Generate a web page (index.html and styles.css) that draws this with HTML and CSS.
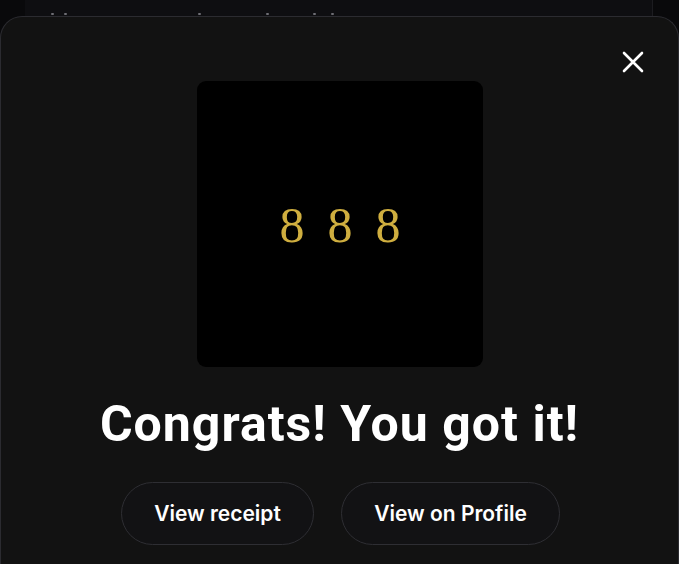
FILE: index.html
```html
<!DOCTYPE html>
<html lang="en">
<head>
  <meta charset="UTF-8" />
  <title>Congrats</title>
  <link rel="stylesheet" href="styles.css">
</head>
<body>
  <div class="back-card">
    <!-- only the bottom tips of the text behind the sheet show through -->
    <div class="back-marks">
      <span class="mark m1"></span><span class="mark m2"></span>
      <span class="mark m3"></span><span class="mark m4"></span>
      <span class="mark m5"></span><span class="mark m6"></span>
    </div>
  </div>

  <div class="modal">
    <button class="close-btn" aria-label="Close">
      <svg width="22" height="22" viewBox="0 0 22 22">
        <path d="M2 2 L20 20 M20 2 L2 20" stroke="#fff" stroke-width="2.6" stroke-linecap="round" fill="none"/>
      </svg>
    </button>

    <div class="art">
      <span class="digits">888</span>
    </div>

    <h2 class="title">Congrats! You got it!</h2>

    <div class="actions">
      <button class="pill pill-receipt">View receipt</button>
      <button class="pill pill-profile">View on Profile</button>
    </div>
  </div>
</body>
</html>
```

FILE: styles.css
```css
body { margin: 0; background: #09090b; font-family: Roboto, "Liberation Sans", sans-serif; height: 564px; overflow: hidden; }
.back-card { margin: 0 26px 0 25px; height: 16px; background: #0e0e11; border-right: 1px solid #1c1c20; overflow: hidden; }
.back-marks { display: flex; height: 16px; align-items: flex-end; }
.mark { width: 3px; height: 2px; background: #6e6e74; border-radius: 1px; margin-bottom: 1px; }
.m1 { margin-left: 26px; }
.m2 { margin-left: 10px; }
.m3 { margin-left: 131px; }
.m4 { margin-left: 65px; }
.m5 { margin-left: 44px; }
.m6 { margin-left: 15px; }
.modal { position: relative; height: 548px; box-sizing: border-box; background: #121212; border: 1px solid #2b2b30; border-bottom: none; border-radius: 22px 22px 0 0; padding-top: 64px; display: flex; flex-direction: column; align-items: center; }
.close-btn { position: absolute; top: 34px; right: 34px; background: none; border: none; padding: 0; width: 22px; height: 22px; cursor: pointer; }
.art { width: 286px; height: 286px; background: #000; border-radius: 9px; display: flex; align-items: center; justify-content: center; margin-left: 1px; }
.digits { font-family: "Liberation Serif", serif; font-size: 50px; color: #cfae3f; letter-spacing: 23px; padding-left: 23px; line-height: 1; margin-top: 2px; }
.title { margin: 27px 0 0; color: #fff; font-size: 50px; font-weight: 700; letter-spacing: 1px; line-height: 60px; }
.actions { display: flex; gap: 27px; margin-top: 28px; margin-left: 2px; }
.pill { height: 63px; border-radius: 32px; border: 1px solid #2e2e33; background: #121214; color: #fff; font-family: Inter, "Liberation Sans", sans-serif; font-size: 21px; font-weight: 600; }
.pill-receipt { width: 193px; }
.pill-profile { width: 219px; }
```
